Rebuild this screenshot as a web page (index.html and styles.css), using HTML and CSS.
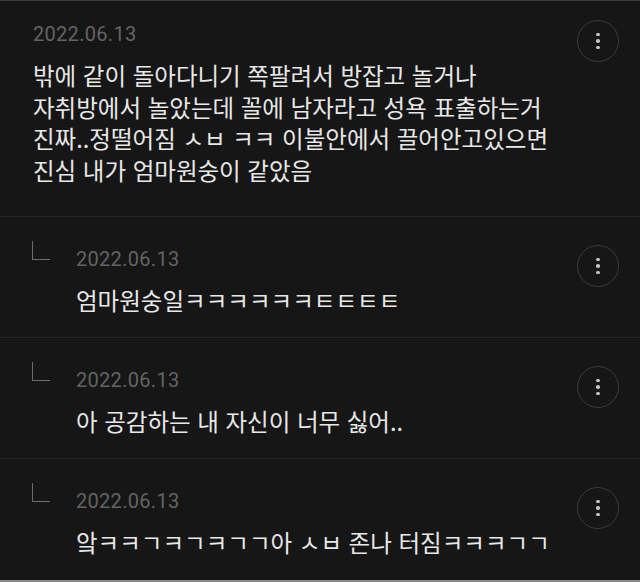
FILE: index.html
```html
<!DOCTYPE html>
<html lang="ko">
<head>
<meta charset="utf-8">
<link rel="stylesheet" href="styles.css">
</head>
<body>
<div class="list">
  <div class="comment top">
    <div class="body">
      <div class="date">2022.06.13</div>
      <div class="text">밖에 같이 돌아다니기 쪽팔려서 방잡고 놀거나<br>자취방에서 놀았는데 꼴에 남자라고 성욕 표출하는거<br>진짜..정떨어짐 ㅅㅂ ㅋㅋ 이불안에서 끌어안고있으면<br>진심 내가 엄마원숭이 같았음</div>
    </div>
    <button class="more"><span></span><span></span><span></span></button>
  </div>
  <div class="comment reply">
    <div class="arrow"></div>
    <div class="body">
      <div class="date">2022.06.13</div>
      <div class="text">엄마원숭일ㅋㅋㅋㅋㅋㅋㅌㅌㅌㅌ</div>
    </div>
    <button class="more"><span></span><span></span><span></span></button>
  </div>
  <div class="comment reply">
    <div class="arrow"></div>
    <div class="body">
      <div class="date">2022.06.13</div>
      <div class="text">아 공감하는 내 자신이 너무 싫어..</div>
    </div>
    <button class="more"><span></span><span></span><span></span></button>
  </div>
  <div class="comment reply">
    <div class="arrow"></div>
    <div class="body">
      <div class="date">2022.06.13</div>
      <div class="text">앜ㅋㅋㄱㅋㄱㅋㄱㄱ아 ㅅㅂ 존나 터짐ㅋㅋㅋㄱㄱ</div>
    </div>
    <button class="more"><span></span><span></span><span></span></button>
  </div>
</div>
</body>
</html>
```

FILE: styles.css
```css
html, body {
  margin: 0;
  padding: 0;
  background: #161616;
}
body {
  width: 640px;
  height: 582px;
  overflow: hidden;
  font-family: "Noto Sans CJK KR", "Noto Sans", sans-serif;
}
.list {
  border-top: 1px solid #3a3a3a;
  border-bottom: 2px solid #8a8a8a;
  height: 579px;
  display: flex;
  flex-direction: column;
}
.comment {
  display: flex;
  align-items: flex-start;
  padding: 21px 21px 0 33px;
}
.comment.top {
  height: 194px;
}
.comment.reply {
  border-top: 1px solid #242424;
  height: 90px;
  padding-top: 30px;
  padding-left: 32px;
}
.body {
  flex: 1;
  display: flex;
  flex-direction: column;
  gap: 14px;
}
.date {
  font-family: Roboto, "Liberation Sans", sans-serif;
  font-size: 20px;
  line-height: 24px;
  color: #636363;
  letter-spacing: 0.3px;
}
.text {
  font-size: 23.5px;
  line-height: 31.5px;
  color: #e8e8e8;
  white-space: nowrap;
}
.arrow {
  width: 17px;
  height: 18px;
  border-left: 1.5px solid #6c6c6c;
  border-bottom: 1.5px solid #6c6c6c;
  margin-top: -6px;
  margin-right: 26px;
}
.more {
  width: 42px;
  height: 42px;
  border-radius: 50%;
  border: 1.5px solid #3c3c3c;
  background: transparent;
  padding: 0;
  margin-top: -2px;
  display: flex;
  flex-direction: column;
  align-items: center;
  justify-content: center;
  gap: 3px;
}
.more span {
  width: 3.5px;
  height: 3.5px;
  border-radius: 50%;
  background: #c4c4c4;
}
```
